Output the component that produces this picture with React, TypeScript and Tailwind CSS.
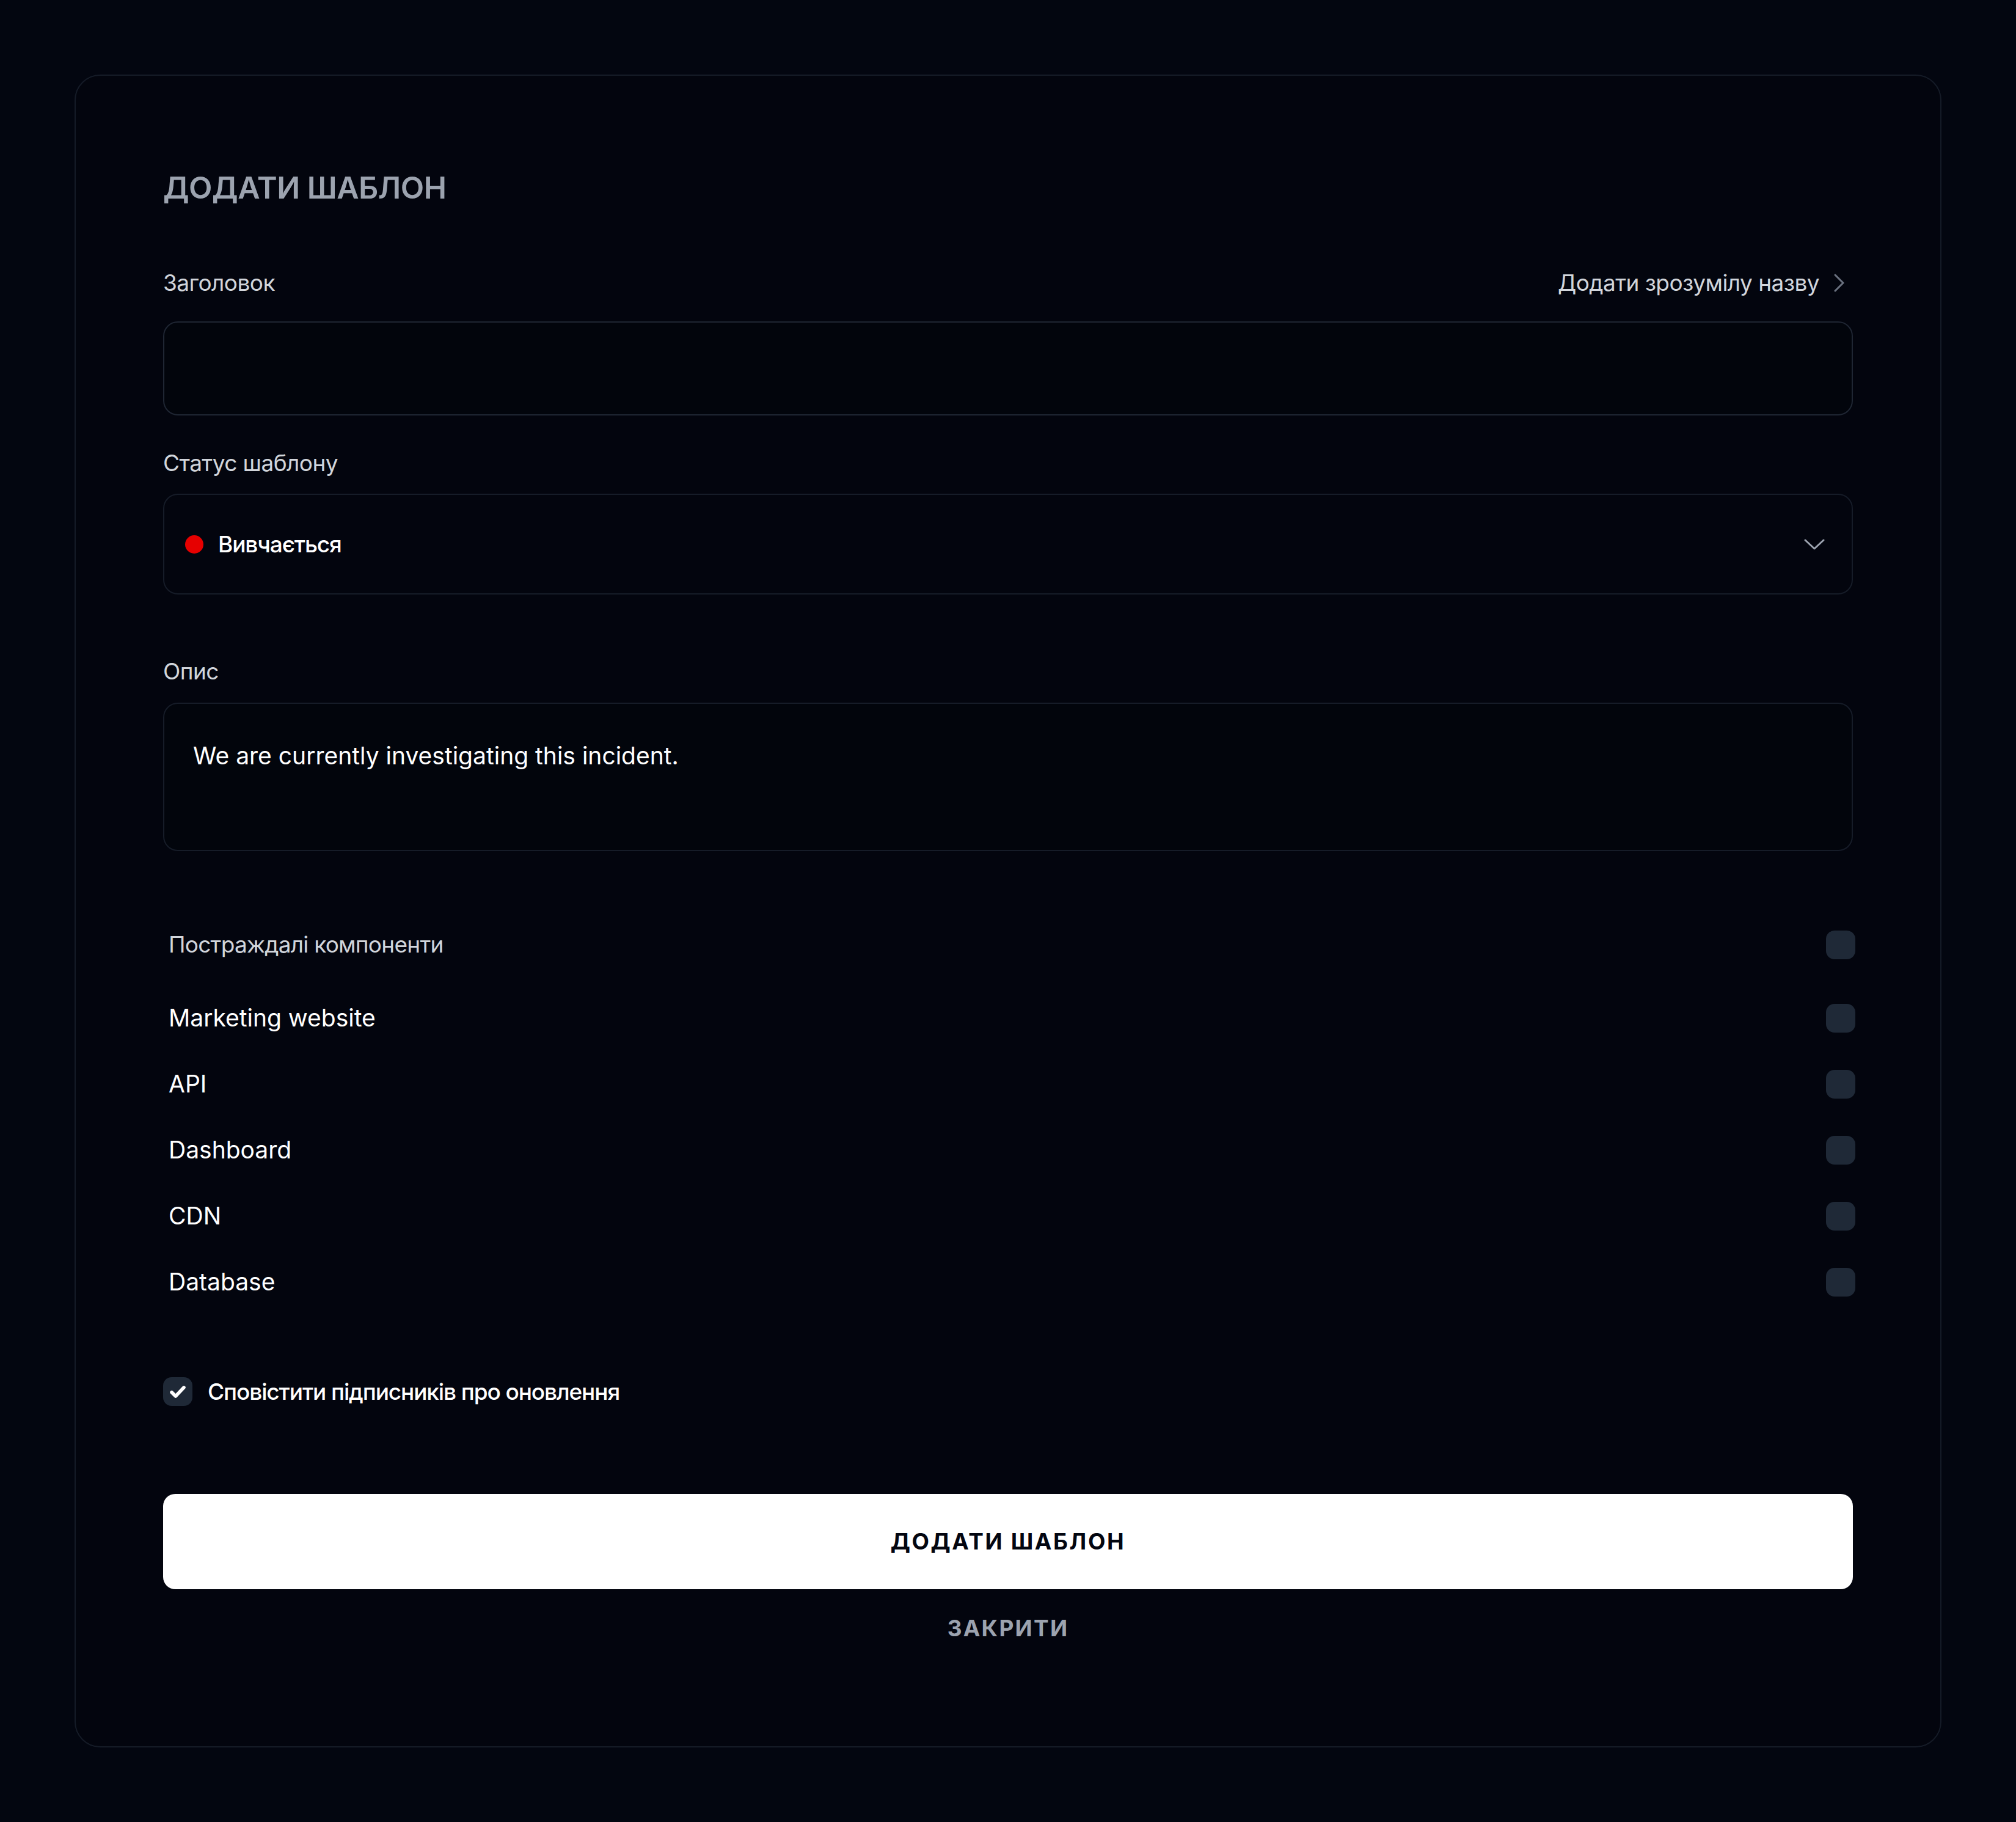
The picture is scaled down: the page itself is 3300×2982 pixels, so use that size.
import { useState } from "react";

const components = ["Marketing website", "API", "Dashboard", "CDN", "Database"];

function Toggle({ checked, onChange }: { checked: boolean; onChange: () => void }) {
  return (
    <button
      onClick={onChange}
      className="h-[47px] w-[48px] rounded-[14px] bg-[#1f2937] flex items-center justify-center"
    >
      {checked && (
        <svg viewBox="0 0 24 24" className="h-[34px] w-[34px]" fill="none" stroke="#fff" strokeWidth="4" strokeLinecap="round" strokeLinejoin="round">
          <path d="M5 12.5l4.5 4.5L19 7" />
        </svg>
      )}
    </button>
  );
}

export default function App() {
  const [title, setTitle] = useState("");
  const [description, setDescription] = useState("We are currently investigating this incident.");
  const [selected, setSelected] = useState<string[]>([]);
  const [allSelected, setAllSelected] = useState(false);
  const [notify, setNotify] = useState(true);

  const toggle = (name: string) =>
    setSelected((prev) => (prev.includes(name) ? prev.filter((n) => n !== name) : [...prev, name]));

  return (
    <div className="min-h-screen bg-[#030610] p-[122px] font-['Inter','Noto_Sans',sans-serif]">
      <div className="flex flex-col rounded-[42px] border-2 border-[#151b27] bg-[#03050e] px-[143px] pt-[151px] pb-[168px]">
        <h2 className="h-[64px] text-[50px] leading-[64px] font-semibold tracking-[-0.01em] text-[#9ca3af]">
          ДОДАТИ ШАБЛОН
        </h2>

        <div className="mt-[99px] flex h-[50px] items-center justify-between">
          <label className="text-[37px] leading-[50px] tracking-[-0.015em] text-[#d1d5db]">Заголовок</label>
          <button className="flex items-center gap-[24px] pr-[14px] text-[37px] leading-[50px] tracking-[-0.015em] text-[#d1d5db]">
            Додати зрозумілу назву
            <svg viewBox="0 0 17 30" className="h-[30px] w-[17px]" fill="none" stroke="#6b7280" strokeWidth="3" strokeLinecap="round" strokeLinejoin="round">
              <path d="M2 2l13 13L2 28" />
            </svg>
          </button>
        </div>
        <input
          value={title}
          onChange={(e) => setTitle(e.target.value)}
          className="mt-[38px] h-[154px] w-full rounded-[24px] border-2 border-[#1f2633] bg-[#02050c] px-[48px] text-[38px] text-white outline-none"
        />

        <label className="mt-[53px] h-[50px] text-[37px] leading-[50px] tracking-[-0.015em] text-[#d1d5db]">Статус шаблону</label>
        <button className="mt-[25px] flex h-[165px] w-full items-center rounded-[24px] border-2 border-[#161c28] bg-[#03050e] pl-[34px] pr-[44px]">
          <span className="h-[30px] w-[30px] rounded-full bg-[#e60000]" />
          <span className="ml-[24px] text-[37px] font-medium tracking-[-0.03em] text-white">Вивчається</span>
          <svg viewBox="0 0 34 18" className="ml-auto h-[18px] w-[34px]" fill="none" stroke="#9ca3af" strokeWidth="3" strokeLinecap="round" strokeLinejoin="round">
            <path d="M2 2l15 14L32 2" />
          </svg>
        </button>

        <label className="mt-[101px] h-[50px] text-[37px] leading-[50px] tracking-[-0.015em] text-[#d1d5db]">Опис</label>
        <textarea
          value={description}
          onChange={(e) => setDescription(e.target.value)}
          className="mt-[26px] h-[243px] w-full resize-none rounded-[24px] border-2 border-[#161c28] bg-[#02050c] px-[47px] pt-[56px] text-[39px] leading-[57px] text-white outline-none"
        />

        <div className="mt-[129px] -mr-[4px] flex flex-col pl-[9px]">
          <div className="flex h-[48px] items-center justify-between">
            <span className="text-[37px] tracking-[-0.02em] text-[#d1d5db]">Постраждалі компоненти</span>
            <Toggle checked={allSelected} onChange={() => setAllSelected(!allSelected)} />
          </div>
          <div className="mt-[72px] flex flex-col gap-[60px]">
            {components.map((name) => (
              <div key={name} className="flex h-[48px] items-center justify-between">
                <span className="text-[39px] text-white">{name}</span>
                <Toggle checked={selected.includes(name)} onChange={() => toggle(name)} />
              </div>
            ))}
          </div>
        </div>

        <label className="mt-[132px] flex h-[47px] items-center gap-[25px]">
          <Toggle checked={notify} onChange={() => setNotify(!notify)} />
          <span className="text-[37px] font-medium tracking-[-0.03em] text-white">Сповістити підписників про оновлення</span>
        </label>

        <button className="mt-[144px] h-[156px] w-full rounded-[20px] bg-white text-[37px] font-bold tracking-[0.07em] text-[#030610]">
          ДОДАТИ ШАБЛОН
        </button>
        <button className="mt-[39px] h-[50px] text-[37px] leading-[50px] font-bold tracking-[0.06em] text-[#9ca3af]">
          ЗАКРИТИ
        </button>
      </div>
    </div>
  );
}
